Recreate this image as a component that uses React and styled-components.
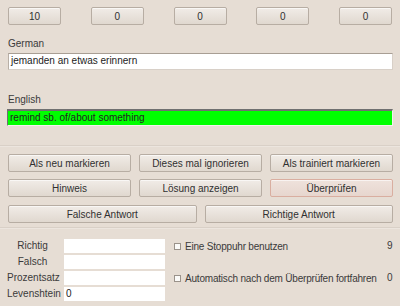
import styled, { createGlobalStyle } from 'styled-components'

const GlobalStyle = createGlobalStyle`
  html, body {
    margin: 0;
    padding: 0;
    background: #e6ddd4;
  }
  body {
    font-family: 'Liberation Sans', Arial, sans-serif;
    font-size: 10px;
    color: #383838;
  }
`

const counters = ['10', '0', '0', '0', '0']

const stats = [
  { label: 'Richtig', value: '', check: 'Eine Stoppuhr benutzen', count: '9' },
  { label: 'Falsch', value: '' },
  {
    label: 'Prozentsatz',
    value: '',
    check: 'Automatisch nach dem Überprüfen fortfahren',
    count: '0',
  },
  { label: 'Levenshtein', value: '0' },
]

function App() {
  return (
    <Page>
      <GlobalStyle />
      <CounterRow>
        {counters.map((c, i) => (
          <CounterButton key={i}>{c}</CounterButton>
        ))}
      </CounterRow>

      <FieldLabel>German</FieldLabel>
      <TextField>jemanden an etwas erinnern</TextField>

      <FieldLabel $gap={24}>English</FieldLabel>
      <TextField $correct>remind sb. of/about something</TextField>

      <Separator $gap={19} />

      <ButtonGrid $cols={3} $top={7}>
        <Button>Als neu markieren</Button>
        <Button>Dieses mal ignorieren</Button>
        <Button>Als trainiert markieren</Button>
        <Button>Hinweis</Button>
        <Button>Lösung anzeigen</Button>
        <Button $primary>Überprüfen</Button>
      </ButtonGrid>
      <ButtonGrid $cols={2} $top={8}>
        <Button>Falsche Antwort</Button>
        <Button>Richtige Antwort</Button>
      </ButtonGrid>

      <Separator $gap={4} />

      <StatsGrid>
        {stats.map((s) => (
          <StatRow key={s.label}>
            <StatLabel>{s.label}</StatLabel>
            <StatInput>{s.value}</StatInput>
            {s.check ? (
              <>
                <CheckOption>
                  <Box />
                  {s.check}
                </CheckOption>
                <Count>{s.count}</Count>
              </>
            ) : (
              <>
                <span />
                <span />
              </>
            )}
          </StatRow>
        ))}
      </StatsGrid>
    </Page>
  )
}

const Page = styled.div`
  width: 400px;
  height: 306px;
  box-sizing: border-box;
  padding: 7px 7px 0 8px;
  display: flex;
  flex-direction: column;
  overflow: hidden;
`

const CounterRow = styled.div`
  display: flex;
  justify-content: space-between;
  padding-right: 1px;
`

const Button = styled.button`
  height: 18px;
  box-sizing: border-box;
  padding: 0;
  font-family: inherit;
  font-size: 10px;
  color: #303030;
  border-radius: 2px;
  border: 1px solid ${({ $primary }) => ($primary ? '#d9aea0' : '#b7ada3')};
  background: ${({ $primary }) =>
    $primary
      ? 'linear-gradient(#efe2dc, #e7d6ce)'
      : 'linear-gradient(#f1ece7, #e0d8cf)'};
  box-shadow: inset 0 1px 0 rgba(255, 255, 255, 0.6);
`

const CounterButton = styled(Button)`
  width: 53px;
`

const FieldLabel = styled.div`
  margin-top: ${({ $gap }) => $gap ?? 13}px;
  line-height: 12px;
  color: #3a3a3a;
`

const TextField = styled.div`
  margin-top: 3px;
  height: 17px;
  box-sizing: border-box;
  padding: 0 2px;
  line-height: 14px;
  color: #222;
  background: ${({ $correct }) => ($correct ? '#00ff00' : '#ffffff')};
  border: 1px solid ${({ $correct }) => ($correct ? '#f4f0ec' : '#d8d0c8')};
  border-top: ${({ $correct }) =>
    $correct ? '2px solid #707070' : '1px solid #a89e94'};
  border-left-color: ${({ $correct }) => ($correct ? '#707070' : '#b8afa6')};
  margin-left: ${({ $correct }) => ($correct ? '-1px' : '0')};
`

const Separator = styled.div`
  margin-top: ${({ $gap }) => $gap}px;
  margin-left: -8px;
  margin-right: -7px;
  height: 1px;
  background: #d9d0c7;
  border-bottom: 1px solid #ece5de;
`

const ButtonGrid = styled.div`
  display: grid;
  grid-template-columns: repeat(${({ $cols }) => $cols}, 1fr);
  column-gap: 8px;
  row-gap: 7px;
  margin-top: ${({ $top }) => $top}px;
`

const StatsGrid = styled.div`
  margin-top: 10px;
  margin-left: -1px;
  display: grid;
  grid-template-columns: 51px 107px 1fr auto;
  row-gap: 2px;
`

const StatRow = styled.div`
  display: contents;
`

const StatLabel = styled.div`
  height: 14px;
  line-height: 14px;
  text-align: center;
  white-space: nowrap;
  color: #3a3a3a;
`

const StatInput = styled.div`
  margin-left: 6px;
  height: 14px;
  line-height: 14px;
  padding-left: 2px;
  box-sizing: border-box;
  background: #fff;
  color: #222;
`

const CheckOption = styled.label`
  display: flex;
  align-items: center;
  gap: 4px;
  margin-left: 9px;
  height: 14px;
  letter-spacing: -0.2px;
  white-space: nowrap;
  color: #3a3a3a;
`

const Box = styled.span`
  width: 7px;
  height: 7px;
  box-sizing: border-box;
  border: 1px solid #9a928a;
  background: #fbfaf8;
`

const Count = styled.div`
  width: 6px;
  height: 14px;
  line-height: 14px;
  text-align: left;
  color: #3a3a3a;
`

export default App
